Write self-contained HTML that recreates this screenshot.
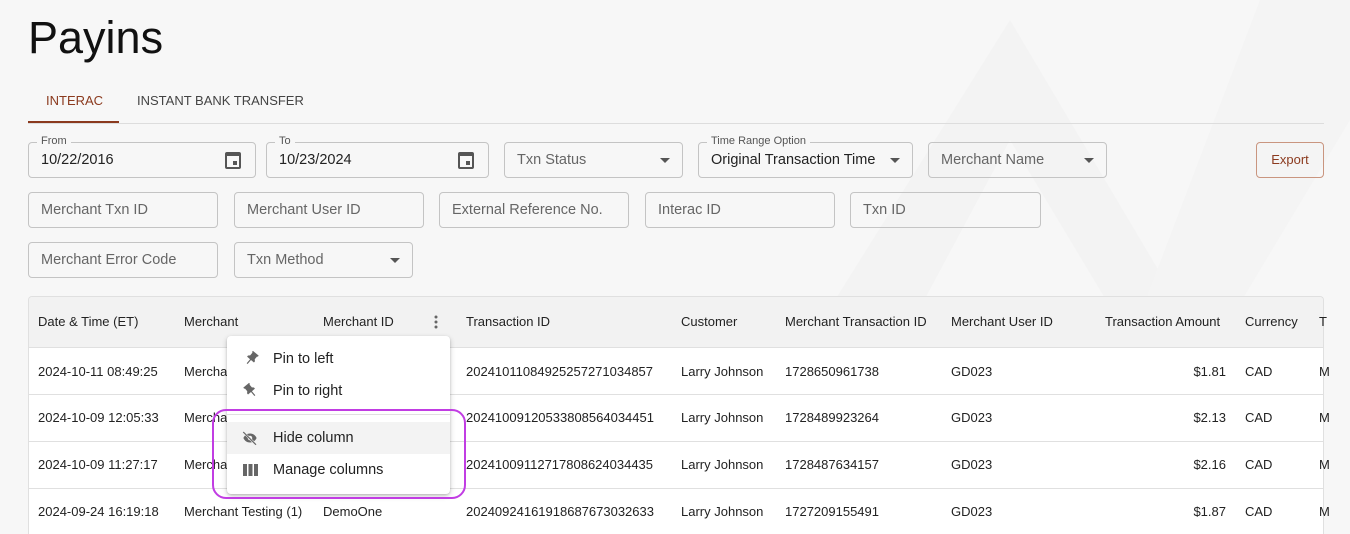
<!DOCTYPE html>
<html><head><meta charset="utf-8"><style>
*{box-sizing:border-box;margin:0;padding:0}
html{width:1350px;height:534px;overflow:hidden}
body{width:1350px;height:534px;overflow:hidden;background:#f7f7f7;font-family:"Liberation Sans",sans-serif;color:#222;position:relative}
.a{position:absolute}
.f{position:absolute;border:1px solid #c4c4c4;border-radius:4px;height:36px;font-size:14.5px;color:#666;padding:0 12px;line-height:34px;white-space:nowrap}
.f.v{color:#222}
.lab{position:absolute;top:-9px;left:8px;background:#f7f7f7;font-size:11px;color:#555;padding:0 4px;line-height:14px}
.car{position:absolute;right:12px;top:15px;width:0;height:0;border-left:5px solid transparent;border-right:5px solid transparent;border-top:5px solid #555}
.cal{position:absolute;right:14px;top:9px;width:16px;height:17px;border:2px solid #555;border-top-width:4px;border-radius:2px}
.cal:after{content:"";position:absolute;right:2px;bottom:2px;width:4px;height:4px;background:#555}
.th{position:absolute;top:314px;font-size:13px;color:#222;white-space:nowrap}
.td{position:absolute;font-size:13px;color:#222;white-space:nowrap}
.line{position:absolute;left:29px;width:1294px;height:1px;background:#e0e0e0}
.mi{position:absolute;left:0;width:223px;height:32px;font-size:14.5px;color:#222;line-height:32px;padding-left:46px}
</style></head><body>
<svg class="a" style="left:700px;top:0" width="650" height="534"><polygon points="310,20 500,340 430,340 310,140 160,420 60,420" fill="#f3f3f3"/><polygon points="560,0 650,0 650,120 470,420 400,420" fill="#f4f4f4"/></svg>
<div class="a" style="left:28px;top:12px;font-size:45px;color:#111">Payins</div>
<div class="a" style="left:46px;top:93px;font-size:13px;color:#8b3a1e">INTERAC</div>
<div class="a" style="left:137px;top:93px;font-size:13px;color:#444">INSTANT BANK TRANSFER</div>
<div class="a" style="left:28px;top:123px;width:1296px;height:1px;background:#ddd"></div>
<div class="a" style="left:28px;top:121px;width:91px;height:2px;background:#8b3a1e"></div>

<div class="f v" style="left:28px;top:142px;width:228px"><span class="lab">From</span>10/22/2016<span class="cal"></span></div>
<div class="f v" style="left:266px;top:142px;width:223px"><span class="lab">To</span>10/23/2024<span class="cal"></span></div>
<div class="f" style="left:504px;top:142px;width:179px">Txn Status<span class="car"></span></div>
<div class="f v" style="left:698px;top:142px;width:215px"><span class="lab">Time Range Option</span>Original Transaction Time<span class="car"></span></div>
<div class="f" style="left:928px;top:142px;width:179px">Merchant Name<span class="car"></span></div>
<div class="f" style="left:1256px;top:142px;width:68px;border-color:#c9957f;color:#8b3a1e;font-size:13px;text-align:center;padding:0">Export</div>

<div class="f" style="left:28px;top:192px;width:190px">Merchant Txn ID</div>
<div class="f" style="left:234px;top:192px;width:190px">Merchant User ID</div>
<div class="f" style="left:439px;top:192px;width:190px">External Reference No.</div>
<div class="f" style="left:645px;top:192px;width:190px">Interac ID</div>
<div class="f" style="left:850px;top:192px;width:191px">Txn ID</div>
<div class="f" style="left:28px;top:242px;width:190px">Merchant Error Code</div>
<div class="f" style="left:234px;top:242px;width:179px">Txn Method<span class="car"></span></div>

<div class="a" style="left:28px;top:296px;width:1296px;height:238px;border:1px solid #e0e0e0;border-bottom:none;border-radius:4px 4px 0 0;background:#fff;overflow:hidden">
<div style="height:51px;background:#f2f2f2;border-bottom:1px solid #e0e0e0"></div></div>
<div class="line" style="top:394px"></div><div class="line" style="top:441px"></div><div class="line" style="top:488px"></div>
<div class="th" style="left:38px">Date &amp; Time (ET)</div>
<div class="th" style="left:184px">Merchant</div>
<div class="th" style="left:323px">Merchant ID</div>
<svg class="a" style="left:433px;top:314px" width="6" height="16"><circle cx="3" cy="3" r="1.5" fill="#666"/><circle cx="3" cy="8" r="1.5" fill="#666"/><circle cx="3" cy="13" r="1.5" fill="#666"/></svg>
<div class="th" style="left:466px">Transaction ID</div>
<div class="th" style="left:681px">Customer</div>
<div class="th" style="left:785px">Merchant Transaction ID</div>
<div class="th" style="left:951px">Merchant User ID</div>
<div class="th" style="left:1105px">Transaction Amount</div>
<div class="th" style="left:1245px">Currency</div>
<div class="th" style="left:1319px">T</div>

<div class="td" style="left:38px;top:364px">2024-10-11 08:49:25</div>
<div class="td" style="left:38px;top:410px">2024-10-09 12:05:33</div>
<div class="td" style="left:38px;top:457px">2024-10-09 11:27:17</div>
<div class="td" style="left:38px;top:504px">2024-09-24 16:19:18</div>
<div class="td" style="left:184px;top:364px">Merchant</div>
<div class="td" style="left:184px;top:410px">Merchant</div>
<div class="td" style="left:184px;top:457px">Merchant</div>
<div class="td" style="left:184px;top:504px">Merchant Testing (1)</div>
<div class="td" style="left:323px;top:504px">DemoOne</div>
<div class="td" style="left:466px;top:364px">20241011084925257271034857</div>
<div class="td" style="left:466px;top:410px">20241009120533808564034451</div>
<div class="td" style="left:466px;top:457px">20241009112717808624034435</div>
<div class="td" style="left:466px;top:504px">20240924161918687673032633</div>
<div class="td" style="left:681px;top:364px">Larry Johnson</div>
<div class="td" style="left:681px;top:410px">Larry Johnson</div>
<div class="td" style="left:681px;top:457px">Larry Johnson</div>
<div class="td" style="left:681px;top:504px">Larry Johnson</div>
<div class="td" style="left:785px;top:364px">1728650961738</div>
<div class="td" style="left:785px;top:410px">1728489923264</div>
<div class="td" style="left:785px;top:457px">1728487634157</div>
<div class="td" style="left:785px;top:504px">1727209155491</div>
<div class="td" style="left:951px;top:364px">GD023</div>
<div class="td" style="left:951px;top:410px">GD023</div>
<div class="td" style="left:951px;top:457px">GD023</div>
<div class="td" style="left:951px;top:504px">GD023</div>
<div class="td" style="right:124px;top:364px">$1.81</div>
<div class="td" style="right:124px;top:410px">$2.13</div>
<div class="td" style="right:124px;top:457px">$2.16</div>
<div class="td" style="right:124px;top:504px">$1.87</div>
<div class="td" style="left:1245px;top:364px">CAD</div>
<div class="td" style="left:1245px;top:410px">CAD</div>
<div class="td" style="left:1245px;top:457px">CAD</div>
<div class="td" style="left:1245px;top:504px">CAD</div>
<div class="td" style="left:1319px;top:364px">M</div>
<div class="td" style="left:1319px;top:410px">M</div>
<div class="td" style="left:1319px;top:457px">M</div>
<div class="td" style="left:1319px;top:504px">M</div>

<div class="a" style="left:227px;top:336px;width:223px;height:158px;background:#fff;border-radius:4px;box-shadow:0 2px 6px rgba(0,0,0,.2),0 1px 2px rgba(0,0,0,.15)">
<div class="mi" style="top:7px"><svg class="a" style="left:15px;top:7px" width="18" height="18" viewBox="0 0 24 24"><path d="M16 9V4h1V2H7v2h1v5l-2 2v2h5.2v7h1.6v-7H18v-2z" fill="#666" transform="rotate(40 12 12)"/></svg>Pin to left</div>
<div class="mi" style="top:39px"><svg class="a" style="left:15px;top:7px" width="18" height="18" viewBox="0 0 24 24"><path d="M16 9V4h1V2H7v2h1v5l-2 2v2h5.2v7h1.6v-7H18v-2z" fill="#666" transform="rotate(-40 12 12)"/></svg>Pin to right</div>
<div class="a" style="left:0;top:78px;width:223px;height:1px;background:#e0e0e0"></div>
<div class="mi" style="top:86px;background:#f3f3f3"><svg class="a" style="left:14px;top:7px" width="18" height="18" viewBox="0 0 24 24"><path d="M12 6c3.8 0 7.2 2.1 8.8 6-1.6 3.9-5 6-8.8 6s-7.2-2.1-8.8-6C4.8 8.1 8.2 6 12 6zm0 3a3 3 0 100 6 3 3 0 000-6z" fill="#666"/><path d="M3 4l17 17" stroke="#f3f3f3" stroke-width="3"/><path d="M3 4l17 17" stroke="#666" stroke-width="1.6"/></svg>Hide column</div>
<div class="mi" style="top:118px"><svg class="a" style="left:16px;top:10px" width="15" height="12" viewBox="0 0 15 12"><rect x="0" y="0" width="4" height="12" fill="#666"/><rect x="5.5" y="0" width="4" height="12" fill="#666"/><rect x="11" y="0" width="4" height="12" fill="#666"/></svg>Manage columns</div>
</div>
<div class="a" style="left:212px;top:409px;width:254px;height:90px;border:2px solid #c13de3;border-radius:14px"></div>
</body></html>
